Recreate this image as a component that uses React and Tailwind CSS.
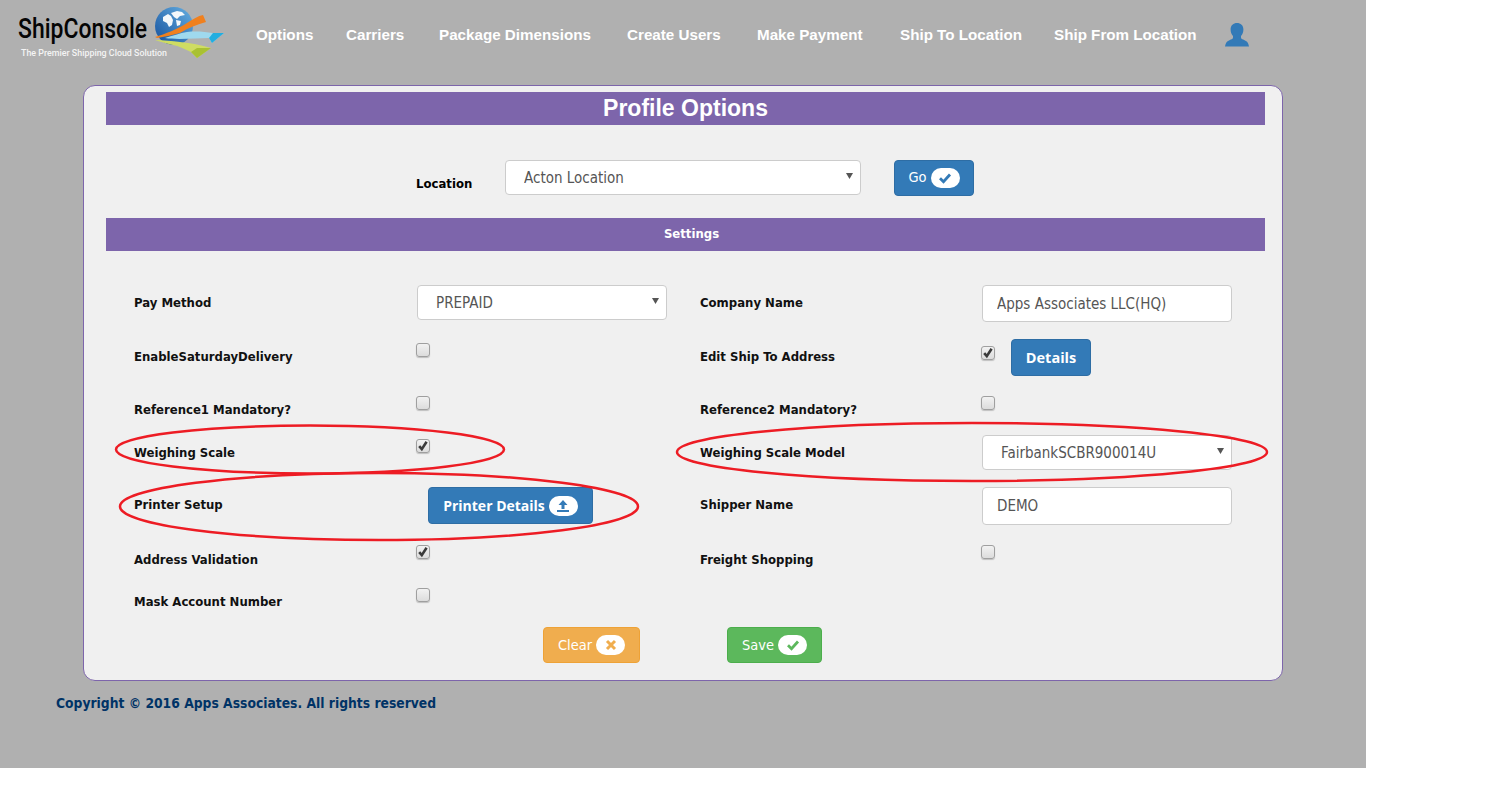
import React from "react";

const labelFont = "font-['DejaVu_Sans',sans-serif] font-stretch-condensed";
const fieldFont = "font-['DejaVu_Sans',sans-serif] font-stretch-condensed";

const navItems = [
  { name: "Options", width: "w-[90px]" },
  { name: "Carriers", width: "w-[93px]" },
  { name: "Package Dimensions", width: "w-[188px]" },
  { name: "Create Users", width: "w-[130px]" },
  { name: "Make Payment", width: "w-[143px]" },
  { name: "Ship To Location", width: "w-[154px]" },
  { name: "Ship From Location", width: "w-[171px]" },
];

const Logo = () => (
  <div className="relative w-[256px] h-[85px] shrink-0">
    <div className="ml-[18px] pt-[13px] origin-left scale-x-[0.85] font-['Roboto',sans-serif] font-medium text-[27px] leading-[32px] text-[#050505]">
      ShipConsole
    </div>
    <div className="pl-[21px] pt-[1px] font-['Roboto',sans-serif] font-medium text-[8.9px] leading-[14px] text-[#f4f4f4]">
      The Premier Shipping Cloud Solution
    </div>
    <svg className="absolute left-[150px] top-[4px]" width="80" height="58" viewBox="150 4 80 58">
      <defs>
        <linearGradient id="globe" x1="0" y1="1" x2="1" y2="0">
          <stop offset="0" stopColor="#134f9c" />
          <stop offset="1" stopColor="#67b0e2" />
        </linearGradient>
      </defs>
      <circle cx="174" cy="26" r="19" fill="url(#globe)" />
      <path d="M163 17l5-3 3 2 2 4-1 5-3 2-2-4-4-2zM171 13l6-2 5 1 3 3-5 1-3 3-3-2zM176 20l5 1-1 4-3 1z" fill="#f4f8fb" />
      <path d="M155 37C165 34 178 29 187 23C193 19 198 16 203 15L206 22C196 25 188 28 180 33C172 35 164 37 157 38Z" fill="#f0801e" />
      <path d="M165 38C172 36 180 33 187 32C197 31 205 32 213 33L224 33L212 43L209 38C196 38 178 40 165 38Z" fill="#9fd9ee" />
      <path d="M212 43L224 33L213 33L209 38Z" fill="#22aee0" />
      <path d="M155 40c9 0 17 1 25 2 11 1 21 3 31 6l-14 10-6-6c-7-3-12-6-18-7-7-2-13-3-18-5z" fill="#cfdc62" />
      <path d="M197 58l14-10-14 0-6 4z" fill="#a9c132" />
    </svg>
  </div>
);

const Header = () => (
  <header className="flex items-start h-[85px]">
    <Logo />
    <nav className="flex items-center h-[70px] font-['Liberation_Sans',sans-serif] font-bold text-[15.2px] text-white">
      {navItems.map((item) => (
        <a key={item.name} href="#" className={item.width}>
          {item.name}
        </a>
      ))}
      <svg width="24" height="24" viewBox="0 0 24 24" fill="#337ab7">
        <path d="M12 0c3.600 0 6.400 2.400 6.400 6.400 0 2.800-1 5.200-2.400 6.600v1.400c0 1 .8 1.600 2.200 2.200l3.200 1.600c1.200.6 2 2.200 2.600 5.300H0c.6-3.100 1.400-4.700 2.600-5.300l3.200-1.600c1.400-.6 2.200-1.200 2.200-2.200V13c-1.400-1.400-2.400-3.800-2.400-6.600C5.600 2.400 8.400 0 12 0z" />
      </svg>
    </nav>
  </header>
);

const Checkbox = ({ checked }) => (
  <label className="relative block -ml-px w-[14px] h-[14px]">
    <input
      type="checkbox"
      defaultChecked={checked}
      className="appearance-none block w-[14px] h-[14px] rounded-[3px] border border-[#9f9f9f] bg-linear-to-b from-[#f2f2f2] to-[#dcdcdc] shadow-[0_1px_1px_rgba(0,0,0,0.2)]"
    />
    {checked && (
      <svg className="absolute left-[1px] top-[1px] pointer-events-none" width="12" height="12" viewBox="0 0 12 12">
        <path d="M2.200 6.200l2.600 3 4.800-7.400" fill="none" stroke="#3a3a3a" strokeWidth="2.600" />
      </svg>
    )}
  </label>
);

const Select = ({ value, className }) => (
  <div className={`relative h-[35px] ${className}`}>
    <select
      defaultValue={value}
      className={`appearance-none w-full h-full bg-white border border-[#ccc] rounded-[4px] pl-[18px] pr-[20px] pt-[2px] text-[15px] text-[#555] ${fieldFont}`}
    >
      <option>{value}</option>
    </select>
    <svg className="absolute right-[8px] top-[13px] pointer-events-none" width="7" height="6" viewBox="0 0 7 6" fill="#555">
      <path d="M0 0h7L3.500 6z" />
    </svg>
  </div>
);

const TextInput = ({ value, className }) => (
  <input
    type="text"
    defaultValue={value}
    className={`w-[250px] bg-white border border-[#ccc] rounded-[4px] px-[14px] text-[15px] text-[#555] ${fieldFont} ${className}`}
  />
);

const Pill = ({ children, className }) => (
  <span className={`inline-flex items-center justify-center w-[29px] h-[20px] rounded-[10px] bg-white ${className}`}>
    {children}
  </span>
);

const CheckGlyph = () => (
  <svg width="14" height="12" viewBox="0 0 14 12">
    <path d="M2 6.200l3.500 3.500L12 2.500" fill="none" stroke="currentColor" strokeWidth="2.800" />
  </svg>
);

const Label = ({ children, className }) => (
  <div className={`text-[13px] leading-[20px] font-bold text-[#111] ${labelFont} ${className}`}>{children}</div>
);

const Row = ({ className, labelPad = "pt-[8px]", leftLabel, left, rightLabel, right }) => (
  <div className={`flex pl-[50px] ${className}`}>
    <Label className={`w-[283px] shrink-0 ${labelPad}`}>{leftLabel}</Label>
    <div className="w-[250px] shrink-0">{left}</div>
    <Label className={`w-[282px] shrink-0 ml-[33px] ${labelPad}`}>{rightLabel}</Label>
    <div className="w-[250px] shrink-0">{right}</div>
  </div>
);

const CheckCell = ({ checked, pad = "pt-[5px]" }) => (
  <div className={pad}>
    <Checkbox checked={checked} />
  </div>
);

const Settings = () => (
  <div className="mt-[34px]">
    <Row
      className="h-[53px]"
      leftLabel="Pay Method"
      left={<Select value="PREPAID" className="w-[250px]" />}
      rightLabel="Company Name"
      right={<TextInput value="Apps Associates LLC(HQ)" className="h-[37px]" />}
    />
    <Row
      className="h-[53px]"
      labelPad="pt-[9px]"
      leftLabel="EnableSaturdayDelivery"
      left={<CheckCell />}
      rightLabel="Edit Ship To Address"
      right={
        <div className="flex items-start pt-[1px]">
          <div className="pt-[7px]">
            <Checkbox checked />
          </div>
          <button className="ml-[16px] w-[80px] h-[37px] rounded-[4px] bg-[#337ab7] border border-[#2e6da4] text-white font-bold text-[14.5px] font-['Open_Sans',sans-serif]">
            Details
          </button>
        </div>
      }
    />
    <Row
      className="h-[44px]"
      labelPad="pt-[9px]"
      leftLabel="Reference1 Mandatory?"
      left={<CheckCell />}
      rightLabel="Reference2 Mandatory?"
      right={<CheckCell />}
    />
    <Row
      className="h-[52px]"
      leftLabel="Weighing Scale"
      left={<CheckCell checked pad="pt-[4px]" />}
      rightLabel="Weighing Scale Model"
      right={<Select value="FairbankSCBR900014U" className="w-[250px]" />}
    />
    <Row
      className="h-[54px]"
      leftLabel="Printer Setup"
      left={
        <button className="ml-[11px] flex items-center justify-center gap-[4px] w-[165px] h-[37px] rounded-[4px] bg-[#337ab7] border border-[#2e6da4] text-white font-bold text-[14px] font-['Open_Sans',sans-serif]">
          Printer Details
          <Pill className="text-[#337ab7]">
            <svg width="14" height="14" viewBox="0 0 14 14" fill="currentColor">
              <path d="M7 1l4.500 5H8.500v4h-3V6H2.500zM1 11h12v2H1z" />
            </svg>
          </Pill>
        </button>
      }
      rightLabel="Shipper Name"
      right={<TextInput value="DEMO" className="h-[38px]" />}
    />
    <Row
      className="h-[43px]"
      labelPad="pt-[9px]"
      leftLabel="Address Validation"
      left={<CheckCell checked pad="pt-[4px]" />}
      rightLabel="Freight Shopping"
      right={<CheckCell pad="pt-[4px]" />}
    />
    <Row className="h-[43px]" leftLabel="Mask Account Number" left={<CheckCell pad="pt-[4px]" />} />
  </div>
);

const Ellipses = () => (
  <svg className="absolute inset-0 pointer-events-none" width="1366" height="768" fill="none" stroke="#ed1c24" strokeWidth="2.500">
    <ellipse cx="310" cy="449.500" rx="194" ry="24" />
    <ellipse cx="379" cy="506.500" rx="259" ry="33.500" />
    <ellipse cx="972" cy="452" rx="295" ry="29" />
  </svg>
);

const App = () => (
  <div className="relative w-[1366px] h-[768px] bg-[#b0b0b0]">
    <Header />
    <main className="ml-[83px] w-[1200px] h-[596px] bg-[#f0f0f0] border border-[#7d65ab] rounded-[12px] pt-[6px]">
      <div className="mx-[22px] w-[1159px]">
        <h1 className="h-[33px] bg-[#7d65ab] text-center text-white font-bold text-[23px] leading-[33px] font-['Liberation_Sans',sans-serif]">
          Profile Options
        </h1>
        <div className="flex items-start h-[36px] mt-[35px] pl-[310px]">
          <div className={`w-[89px] pt-[14px] text-[13px] leading-[20px] font-bold text-black ${labelFont}`}>Location</div>
          <Select value="Acton Location" className="w-[356px]" />
          <button className={`ml-[33px] flex items-center justify-center gap-[4px] w-[80px] h-[36px] rounded-[4px] bg-[#337ab7] border border-[#2e6da4] text-white text-[14.5px] ${fieldFont}`}>
            Go
            <Pill className="text-[#337ab7]">
              <CheckGlyph />
            </Pill>
          </button>
        </div>
        <div className={`h-[33px] mt-[22px] pl-[12px] bg-[#7d65ab] text-center text-white font-bold text-[13px] leading-[31px] ${labelFont}`}>
          Settings
        </div>
      </div>
      <Settings />
      <div className="flex pl-[459px] gap-[87px]">
        <button className={`flex items-center justify-center gap-[4px] w-[97px] h-[36px] rounded-[4px] bg-[#f0ad4e] border border-[#eea236] text-white text-[14.5px] ${fieldFont}`}>
          <span className="mt-[2px]">Clear</span>
          <Pill className="text-[#f0ad4e]">
            <svg width="12" height="12" viewBox="0 0 12 12">
              <path d="M2 2l8 8M10 2l-8 8" stroke="currentColor" strokeWidth="3" />
            </svg>
          </Pill>
        </button>
        <button className={`flex items-center justify-center gap-[4px] w-[95px] h-[36px] rounded-[4px] bg-[#5cb85c] border border-[#4cae4c] text-white text-[14.5px] ${fieldFont}`}>
          <span className="mt-[2px]">Save</span>
          <Pill className="text-[#5cb85c]">
            <CheckGlyph />
          </Pill>
        </button>
      </div>
    </main>
    <footer className={`pl-[56px] pt-[12px] text-[13.75px] leading-[20px] font-bold text-[#003366] ${labelFont}`}>
      Copyright © 2016 Apps Associates. All rights reserved
    </footer>
    <Ellipses />
  </div>
);

export default App;
